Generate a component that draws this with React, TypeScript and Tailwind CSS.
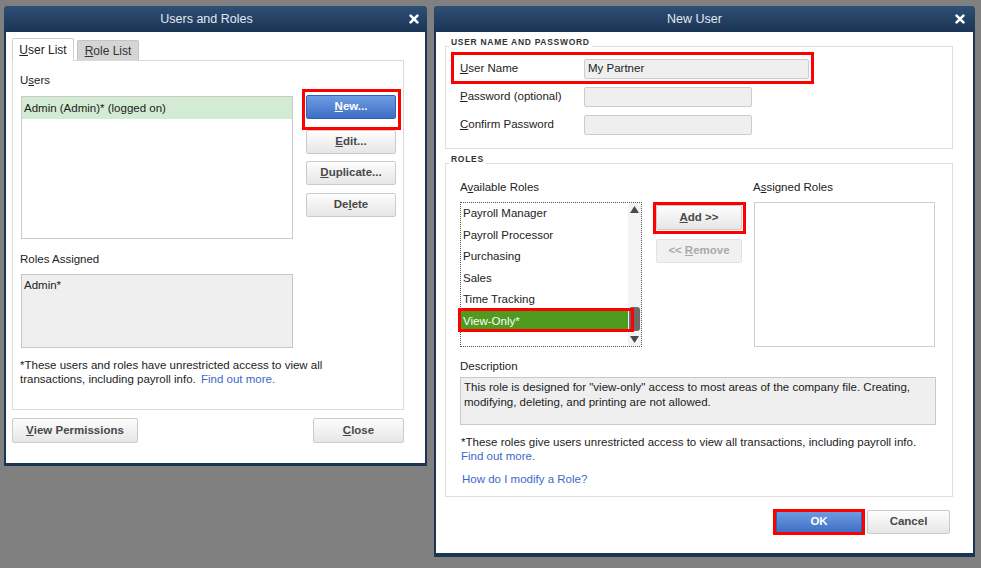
import React from "react";

type C = { children?: React.ReactNode; className?: string };

const U = ({ children }: C) => <span className="underline underline-offset-[1px]">{children}</span>;

function CloseX() {
  return (
    <svg width="10" height="10" viewBox="0 0 10 10" className="block">
      <path d="M1.6 1.6 L8.4 8.4 M8.4 1.6 L1.6 8.4" stroke="#ffffff" strokeWidth="2.6" strokeLinecap="round" />
    </svg>
  );
}

function TitleBar({ title, closeClass }: { title: string; closeClass: string }) {
  return (
    <div className="h-[26px] flex items-center bg-gradient-to-b from-[#2e4f76] to-[#1b3454] rounded-t-[4px]">
      <div className="flex-1 flex justify-center">
        <span className="text-[12.5px] text-[#e3e9f0]">{title}</span>
      </div>
      <div className={"flex justify-end " + closeClass}>
        <CloseX />
      </div>
    </div>
  );
}

function Btn({ children, className = "" }: C) {
  return (
    <div
      className={
        "flex items-center justify-center rounded-[2px] border border-[#cbcbcb] bg-gradient-to-b from-[#fdfdfd] to-[#e6e6e6] text-[11.5px] font-bold text-[#484848] " +
        className
      }
    >
      {children}
    </div>
  );
}

function BlueBtn({ children, className = "" }: C) {
  return (
    <div
      className={
        "flex items-center justify-center rounded-[2px] border border-[#3362b4] bg-gradient-to-b from-[#6f9de2] to-[#3e6ec5] text-[11.5px] font-bold text-white " +
        className
      }
    >
      {children}
    </div>
  );
}

function UsersAndRoles() {
  return (
    <div className="flex flex-col w-[423px] h-[460px] bg-[#1c3553] rounded-t-[4px] pb-[3px]">
      <TitleBar title="Users and Roles" closeClass="w-[18px] pr-[8px]" />
      <div className="flex-1 mx-[2px] bg-white pt-[6px] pl-[6px] pr-[21px] flex flex-col">
        <div className="flex items-end h-[22px]">
          <div className="relative z-10 w-[62px] h-[23px] -mb-px bg-white border border-b-0 border-[#cfcfcf] rounded-t-[2px] flex items-center justify-center text-[12px] text-[#222]">
            <U>U</U>ser List
          </div>
          <div className="ml-[3px] w-[62px] h-[20px] bg-[#d5d5d5] border border-b-0 border-[#c4c4c4] rounded-t-[2px] flex items-center justify-center text-[12px] text-[#333]">
            <U>R</U>ole List
          </div>
        </div>
        <div className="h-[350px] border border-[#dadada] pl-[7px] pt-[12px]">
          <div className="flex">
            <div className="w-[273px]">
              <div className="leading-[15px]">
                U<U>s</U>ers
              </div>
              <div className="mt-[8px] ml-px w-[272px] h-[143px] border border-[#cacaca] bg-white">
                <div className="h-[22px] bg-[#d4ebd3] pl-[2px] leading-[22px]">Admin (Admin)* (logged on)</div>
              </div>
            </div>
            <div className="ml-[13px] mt-[22px] w-[90px] flex flex-col">
              <BlueBtn className="h-[24px]">
                <U>N</U>ew...
              </BlueBtn>
              <Btn className="mt-[11px] h-[24px]">
                <U>E</U>dit...
              </Btn>
              <Btn className="mt-[7px] h-[24px]">
                <U>D</U>uplicate...
              </Btn>
              <Btn className="mt-[8px] h-[24px]">
                De<U>l</U>ete
              </Btn>
            </div>
          </div>
          <div className="mt-[13px] leading-[15px]">Roles Assigned</div>
          <div className="mt-[7px] ml-px w-[272px] h-[74px] border border-[#c6c6c6] bg-[#efefef] pl-[2px] pt-[3px] leading-[15px]">
            Admin*
          </div>
          <div className="mt-[10px] leading-[14px]">
            *These users and roles have unrestricted access to view all
            <br />
            transactions, including payroll info. <span className="ml-[2px] text-[#3d68c9]">Find out more.</span>
          </div>
        </div>
        <div className="mt-[8px] flex justify-between">
          <Btn className="w-[126px] h-[25px]">
            <U>V</U>iew Permissions
          </Btn>
          <Btn className="w-[91px] h-[25px]">
            <U>C</U>lose
          </Btn>
        </div>
      </div>
    </div>
  );
}

function Group({ label, className = "", children }: C & { label: string }) {
  return (
    <div className={"relative border border-[#dedede] " + className}>
      <span className="absolute left-[3px] top-[-10px] bg-white px-[2px] text-[8.5px] leading-[11px] font-bold tracking-[0.7px] text-[#333]">
        {label}
      </span>
      {children}
    </div>
  );
}

function Row({ label, w, value }: { label: React.ReactNode; w: string; value?: string }) {
  return (
    <div className="flex items-center h-[20px]">
      <div className="w-[124px]">{label}</div>
      <div className={"h-[20px] rounded-[2px] border border-[#cccccc] bg-[#efefef] pl-[3px] flex items-center " + w}>
        {value}
      </div>
    </div>
  );
}

function Tri({ down }: { down?: boolean }) {
  return (
    <svg width="9" height="7" viewBox="0 0 9 7" className="block">
      <path d={down ? "M0 0 L9 0 L4.5 7 Z" : "M0 7 L9 7 L4.5 0 Z"} fill="#4a4a4a" />
    </svg>
  );
}

function NewUser() {
  const roles = ["Payroll Manager", "Payroll Processor", "Purchasing", "Sales", "Time Tracking"];
  return (
    <div className="flex flex-col w-[541px] h-[551px] bg-[#1c3553] rounded-t-[4px] pb-[4px]">
      <TitleBar title="New User" closeClass="w-[20px] pr-[10px]" />
      <div className="flex-1 mx-[2px] bg-white pl-[9px] pr-[20px] pt-[14px] flex flex-col">
        <Group label="USER NAME AND PASSWORD" className="h-[103px] pl-[14px] pt-[12px] flex flex-col gap-[8px]">
          <Row
            label={
              <>
                <U>U</U>ser Name
              </>
            }
            w="w-[225px]"
            value="My Partner"
          />
          <Row
            label={
              <>
                <U>P</U>assword (optional)
              </>
            }
            w="w-[168px]"
          />
          <Row
            label={
              <>
                <U>C</U>onfirm Password
              </>
            }
            w="w-[168px]"
          />
        </Group>
        <Group label="ROLES" className="mt-[14px] h-[334px] pl-[14px] pt-[16px]">
          <div className="flex">
            <div className="w-[182px]">
              <div className="leading-[15px]">
                A<U>v</U>ailable Roles
              </div>
              <div className="mt-[7px] h-[145px] border border-dotted border-[#555] flex">
                <div className="flex-1">
                  {roles.map((r) => (
                    <div key={r} className="h-[21.5px] leading-[21.5px] pl-[2px]">
                      {r}
                    </div>
                  ))}
                  <div className="h-[21.5px] leading-[21.5px] pl-[2px] bg-[#4e9b1f] text-white">View-Only*</div>
                </div>
                <div className="w-[13px] flex flex-col bg-[#f3f3f3]">
                  <div className="h-[13px] flex items-center justify-center">
                    <Tri />
                  </div>
                  <div className="flex-1 flex flex-col justify-end px-px">
                    <div className="h-[24px] mb-[2px] rounded-[3px] bg-[#6b6b6b]" />
                  </div>
                  <div className="h-[13px] flex items-center justify-center">
                    <Tri down />
                  </div>
                </div>
              </div>
            </div>
            <div className="ml-[14px] mt-[25px] w-[86px] flex flex-col">
              <Btn className="h-[25px]">
                <U>A</U>dd &gt;&gt;
              </Btn>
              <div className="mt-[9px] h-[24px] flex items-center justify-center rounded-[2px] border border-[#e2e2e2] bg-[#f1f1f1] text-[11.5px] font-bold text-[#a9a9a9]">
                &lt;&lt; <span className="ml-[3px]"><U>R</U>emove</span>
              </div>
            </div>
            <div className="ml-[11px]">
              <div className="leading-[15px]">
                A<U>s</U>signed Roles
              </div>
              <div className="mt-[7px] ml-px w-[181px] h-[145px] border border-[#cfcfcf] bg-white" />
            </div>
          </div>
          <div className="mt-[12px] leading-[15px]">Description</div>
          <div className="mt-[3px] w-[476px] h-[48px] border border-[#c8c8c8] bg-[#efefef] pl-[3px] pt-[2px] leading-[15px]">
            This role is designed for "view-only" access to most areas of the company file. Creating,
            <br />
            modifying, deleting, and printing are not allowed.
          </div>
          <div className="mt-[10px] pl-px leading-[14px]">
            *These roles give users unrestricted access to view all transactions, including payroll info.
            <br />
            <span className="text-[#3d68c9]">Find out more.</span>
          </div>
          <div className="mt-[9px] pl-[2px] leading-[14px] text-[#3d68c9]">How do I modify a Role?</div>
        </Group>
        <div className="mt-[13px] flex justify-end gap-[5px] pr-[3px]">
          <BlueBtn className="w-[86px] h-[24px]">OK</BlueBtn>
          <Btn className="w-[83px] h-[24px]">Cancel</Btn>
        </div>
      </div>
    </div>
  );
}

export default function App() {
  return (
    <div className="relative w-[981px] h-[568px] overflow-hidden bg-[#808080] font-['Liberation_Sans',Arial,sans-serif] text-[11.5px] text-[#222] flex items-start gap-[7px] pl-[4px] pt-[6px]">
      <UsersAndRoles />
      <NewUser />
      <div className="absolute left-[302px] top-[89px] w-[99px] h-[41px] border-[3px] border-[#ff0000]" />
      <div className="absolute left-[451px] top-[52px] w-[363px] h-[32px] border-[3px] border-[#ff0000]" />
      <div className="absolute left-[653px] top-[202px] w-[93px] h-[32px] border-[3px] border-[#ff0000]" />
      <div className="absolute left-[458px] top-[308px] w-[176px] h-[24px] border-[3px] border-[#ff0000]" />
      <div className="absolute left-[773px] top-[509px] w-[92px] h-[26px] border-[3px] border-[#ff0000]" />
    </div>
  );
}
